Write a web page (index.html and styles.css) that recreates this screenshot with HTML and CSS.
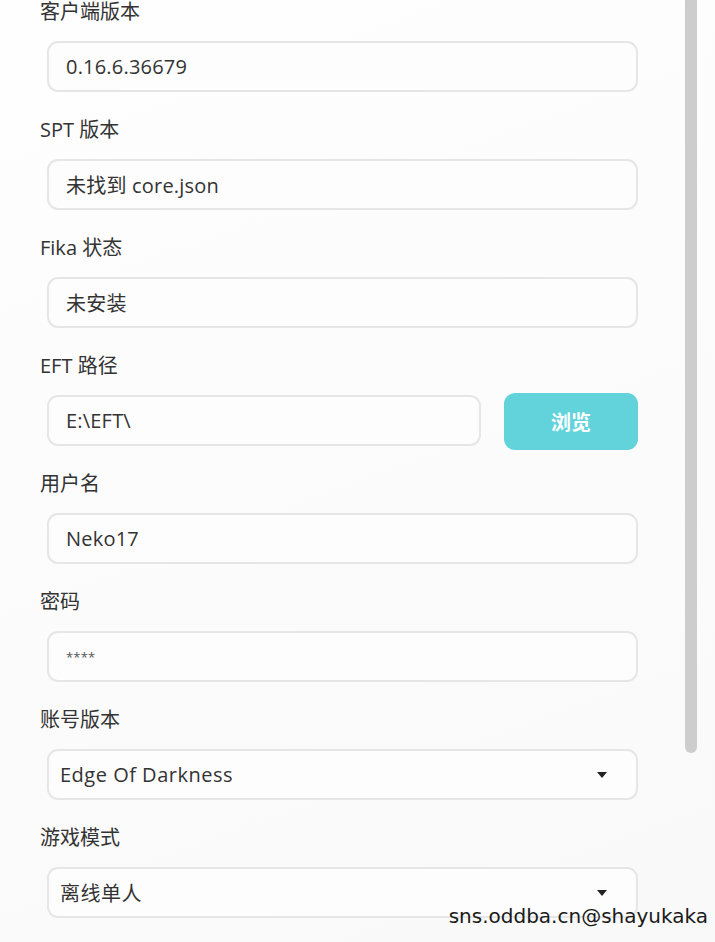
FILE: index.html
```html
<!DOCTYPE html>
<html lang="zh-CN">
<head>
    <meta charset="UTF-8">
    <meta name="viewport" content="width=device-width, initial-scale=1.0">
    <title>启动器设置</title>
    <link rel="stylesheet" href="styles.css">
</head>
<body>
    <div class="settings">
        <div class="field">
            <label class="field-label">客户端版本</label>
            <div class="box">0.16.6.36679</div>
        </div>
        <div class="field">
            <label class="field-label">SPT 版本</label>
            <div class="box">未找到 core.json</div>
        </div>
        <div class="field">
            <label class="field-label">Fika 状态</label>
            <div class="box">未安装</div>
        </div>
        <div class="field">
            <label class="field-label">EFT 路径</label>
            <div class="path-row">
                <div class="box path-box">E:\EFT\</div>
                <button class="browse-btn">浏览</button>
            </div>
        </div>
        <div class="field">
            <label class="field-label">用户名</label>
            <div class="box">Neko17</div>
        </div>
        <div class="field">
            <label class="field-label">密码</label>
            <div class="box password">****</div>
        </div>
        <div class="field">
            <label class="field-label">账号版本</label>
            <div class="box select">
                <span>Edge Of Darkness</span>
                <span class="arrow"></span>
            </div>
        </div>
        <div class="field">
            <label class="field-label">游戏模式</label>
            <div class="box select">
                <span>离线单人</span>
                <span class="arrow"></span>
            </div>
        </div>
    </div>

    <div class="scroll-thumb"></div>
    <div class="watermark">sns.oddba.cn@shayukaka</div>
</body>
</html>
```

FILE: styles.css
```css
body {
    margin: 0;
    height: 942px;
    overflow: hidden;
    background: linear-gradient(160deg, #fefefe 0%, #fbfbfb 60%, #f9f9f9 100%);
    font-family: "Open Sans", "Noto Sans CJK SC", sans-serif;
    color: #333;
}
.settings {
    width: 598px;
    padding-left: 40px;
}
.field {
    margin-bottom: 26px;
}
.field-label {
    display: block;
    font-size: 20px;
    line-height: 24px;
    height: 24px;
    margin-bottom: 17px;
    color: #333;
}
.box {
    box-sizing: border-box;
    height: 51px;
    margin-left: 7px;
    padding: 0 17px;
    border: 2px solid #e6e6e6;
    border-radius: 11px;
    background: #fdfdfd;
    font-size: 20px;
    letter-spacing: 0.2px;
    display: flex;
    align-items: center;
    color: #333;
}
.password {
    font-size: 13px;
    color: #555;
}
.select {
    padding-left: 11px;
    padding-right: 29px;
    justify-content: space-between;
    letter-spacing: 0.5px;
}
.arrow {
    width: 0;
    height: 0;
    border-left: 5px solid transparent;
    border-right: 5px solid transparent;
    border-top: 6px solid #222;
}
.path-row {
    display: flex;
    align-items: flex-start;
    height: 51px;
    gap: 23px;
}
.path-box {
    flex: 1;
}
.browse-btn {
    width: 134px;
    height: 57px;
    margin-top: -2px;
    border: none;
    border-radius: 11px;
    background-color: #63d3db;
    color: #fff;
    font-family: "Noto Sans CJK SC", sans-serif;
    font-weight: bold;
    font-size: 20px;
    cursor: pointer;
}
.scroll-thumb {
    position: absolute;
    top: 0;
    left: 685px;
    width: 12px;
    height: 753px;
    background: #cdcdcd;
    border-radius: 0 0 6px 6px;
}
.watermark {
    position: absolute;
    right: 7px;
    top: 904px;
    font-family: "DejaVu Sans", sans-serif;
    font-size: 20px;
    color: #1a1a1a;
}
```
